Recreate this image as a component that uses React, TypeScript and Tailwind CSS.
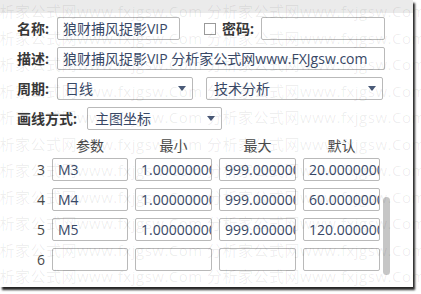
import React from 'react';

const font = "font-['Open_Sans','Noto_Sans_CJK_SC',sans-serif]";
const mark = '分析家公式网www.fxjgsw.Com 分析家公式网www.fxjgsw.Com 分析家公式网www.fxjgsw.Com';
const markRows = [0, 1, 2, 3, 4, 5, 6, 7, 8, 9, 10];

const rows = [
  { n: '3', name: 'M3', min: '1.00000000', max: '999.000000', def: '20.0000000' },
  { n: '4', name: 'M4', min: '1.00000000', max: '999.000000', def: '60.0000000' },
  { n: '5', name: 'M5', min: '1.00000000', max: '999.000000', def: '120.000000' },
  { n: '6', name: '', min: '', max: '', def: '' },
];

function Box({ value, className }: { value: string; className: string }) {
  return (
    <div className={`h-[23px] border border-[#b9b9b9] rounded-[2px] bg-white px-[5px] overflow-hidden whitespace-nowrap leading-[21px] text-[14px] text-[#384866] ${className}`}>
      {value}
    </div>
  );
}

function Select({ value, className }: { value: string; className: string }) {
  return (
    <div className={`h-[23px] border border-[#b9b9b9] rounded-[2px] bg-white pl-[7px] pr-[6px] flex items-center justify-between text-[14px] text-[#384866] ${className}`}>
      <span className="leading-[21px]">{value}</span>
      <svg width="8" height="5" viewBox="0 0 8 5">
        <path d="M0 0H8L4 5Z" fill="#4a5a78" />
      </svg>
    </div>
  );
}

export default function App() {
  return (
    <div className={`w-[421px] h-[294px] bg-white relative overflow-hidden ${font}`}>
      <div className="w-[413px] h-[287px] bg-white flex flex-col shadow-[2px_3px_2px_rgba(0,0,0,0.85)]">
        <div className="h-[13px] bg-[#ebebeb] shrink-0" />
        <div className="flex flex-col gap-[7px] pt-[4px] pl-[17px]">
          <div className="flex items-center">
            <span className="w-[40px] font-bold text-[14px] text-[#383838]">名称:</span>
            <Box value="狼财捕风捉影VIP" className="w-[123px]" />
            <div className="ml-[24px] w-[12px] h-[12px] border border-[#9a9a9a] bg-white" />
            <span className="ml-[6px] w-[39px] font-bold text-[14px] text-[#383838]">密码:</span>
            <Box value="" className="w-[124px]" />
          </div>
          <div className="flex items-center">
            <span className="w-[40px] font-bold text-[14px] text-[#383838]">描述:</span>
            <Box value="狼财捕风捉影VIP 分析家公式网www.FXJgsw.com" className="w-[328px]" />
          </div>
          <div className="flex items-center">
            <span className="w-[40px] font-bold text-[14px] text-[#383838]">周期:</span>
            <Select value="日线" className="w-[136px]" />
            <Select value="技术分析" className="ml-[13px] w-[177px]" />
          </div>
          <div className="flex items-center">
            <span className="w-[70px] font-bold text-[14px] text-[#383838]">画线方式:</span>
            <Select value="主图坐标" className="w-[135px]" />
          </div>
        </div>
        <div className="mt-[6px] pl-[52px] grid grid-cols-[76px_77px_77px_77px] gap-x-[7px] text-[14px] text-[#4a4a4a] text-center leading-[20px]">
          <span>参数</span>
          <span>最小</span>
          <span>最大</span>
          <span>默认</span>
        </div>
        <div className="mt-[2px] flex flex-col gap-[7px]">
          {rows.map((r) => (
            <div key={r.n} className="flex items-center">
              <span className="w-[45px] text-right text-[14px] text-[#4a4a4a]">{r.n}</span>
              <div className="ml-[7px] grid grid-cols-[76px_77px_77px_77px] gap-x-[7px]">
                <Box value={r.name} className="" />
                <Box value={r.min} className="" />
                <Box value={r.max} className="" />
                <Box value={r.def} className="" />
              </div>
            </div>
          ))}
        </div>
      </div>
      <div className="absolute left-[383px] top-[197px] w-[7px] h-[78px] rounded-full bg-[#c6c6c6]" />
      <div className="absolute inset-0 pointer-events-none overflow-hidden">
        {markRows.map((i) => (
          <div
            key={i}
            className="absolute left-[-16px] whitespace-nowrap text-[15px] leading-[20px] text-black/[0.07] tracking-[0.5px]"
            style={{ top: 1 + i * 26.5 }}
          >
            {mark}
          </div>
        ))}
      </div>
    </div>
  );
}
